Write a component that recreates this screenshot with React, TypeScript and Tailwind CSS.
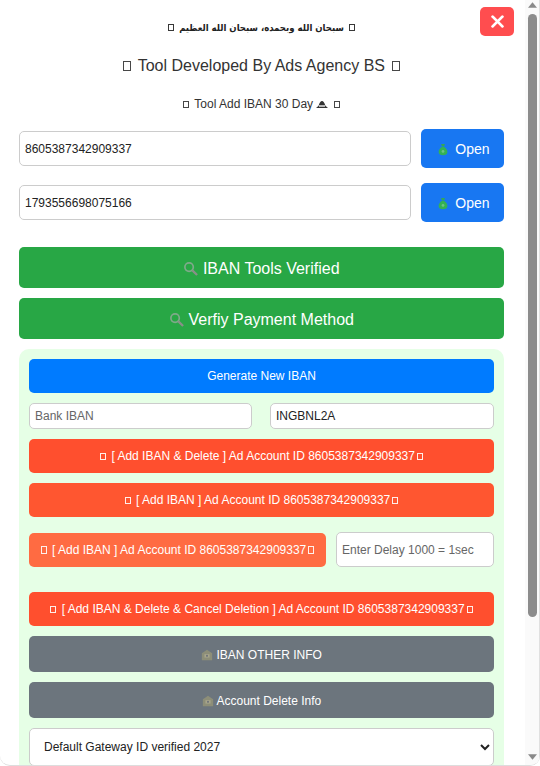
const font = "font-['Liberation_Sans','DejaVu_Sans',sans-serif]"

const Box = () => (
  <span className="inline-block border border-current opacity-90 w-[0.5em] h-[0.62em] mx-[0.16em] align-[-0.02em]" />
)

function MoneyBag() {
  return (
    <svg viewBox="0 0 16 20" className="w-[10px] h-[13px] ml-[3px] mr-[3px] inline-block align-[-2px]">
      <path d="M5 1h6L9.800 5H6.200z" fill="#34a853" />
      <path d="M6 6h4c3 2 5 5 5 8 0 3.500-3 5-7 5s-7-1.500-7-5c0-3 2-6 5-8z" fill="#34b254" />
      <circle cx="8" cy="13" r="2.200" fill="#6cc485" />
    </svg>
  )
}

function Magnifier() {
  return (
    <svg viewBox="0 0 16 16" className="w-[15px] h-[15px] inline-block align-[-2px]" fill="none">
      <circle cx="6.500" cy="6.500" r="4.500" stroke="#7fa98a" strokeWidth="1.800" />
      <path d="M10 10l5 5" stroke="#8a8f88" strokeWidth="2.400" />
    </svg>
  )
}

function Bank() {
  return (
    <svg viewBox="0 0 14 14" className="w-[12px] h-[12px] inline-block align-[-2px]">
      <path d="M1 5l6-4 6 4v8H1z" fill="#8d8e78" />
      <rect x="4" y="6" width="6" height="4" fill="#a7a58c" />
      <circle cx="7" cy="8" r="1.200" fill="#6d7178" />
    </svg>
  )
}

function Dome() {
  return (
    <svg viewBox="0 0 14 8" className="w-[12px] h-[7px] inline-block align-[0px]">
      <path d="M0 8l3-2.500C4 2 5.500 0 7 0s3 2 4 5.500L14 8z" fill="#333" />
      <rect x="3.500" y="5" width="7" height="1.500" fill="#fff" />
    </svg>
  )
}

const inputCls = 'bg-white border border-[#ccc] rounded-[5px] px-[5px] text-[12px] text-[#222] placeholder:text-[#666] outline-none'

function RedButton({ label, className = '' }: { label: string; className?: string }) {
  return (
    <button className={`h-[34px] rounded-[5px] text-white text-[12px] whitespace-nowrap ${className}`}>
      <Box /> {label}
      <Box />
    </button>
  )
}

export default function App() {
  return (
    <div className={`${font} flex w-[540px] h-[766px] bg-white overflow-hidden rounded-b-[10px] border-b border-[#ddd]`}>
      <main className="relative w-[525px] shrink-0 pl-[19px] pr-[21px] overflow-hidden">
        <button className="absolute left-[480px] top-[7px] w-[34px] h-[29px] rounded-[5px] bg-[#ff4d4f] flex items-center justify-center">
          <svg viewBox="0 0 12 12" className="w-[13px] h-[13px]">
            <path d="M1.500 1.500l9 9M10.500 1.500l-9 9" stroke="#fff" strokeWidth="2.600" strokeLinecap="round" />
          </svg>
        </button>

        <p className="pt-[19px] h-[46px] text-center text-[12px] text-[#222] leading-[16px]">
          <Box />{' '}
          <span className="text-[9.5px] font-bold font-['DejaVu_Sans_Condensed','DejaVu_Sans',sans-serif]">
            سبحان الله وبحمده، سبحان الله العظيم
          </span>{' '}
          <Box />
        </p>
        <h1 className="h-[35px] text-center text-[16px] text-[#333] leading-[40px]">
          <Box /> Tool Developed By Ads Agency BS <Box />
        </h1>
        <p className="h-[48px] pt-[15px] text-center text-[12px] text-[#333] leading-[16px]">
          <Box /> Tool Add IBAN 30 Day <Dome /> <Box />
        </p>

        <div className="flex flex-col gap-[15px]">
          {['8605387342909337', '1793556698075166'].map((id) => (
            <div key={id} className="flex items-center gap-[10px]">
              <input readOnly value={id} className={`${inputCls} flex-1 min-w-0 h-[35px]`} />
              <button className="w-[83px] h-[39px] pt-[2px] rounded-[5px] bg-[#1877f2] text-white text-[14px]">
                <MoneyBag /> Open
              </button>
            </div>
          ))}
        </div>

        <div className="flex flex-col gap-[10px] mt-[25px]">
          <button className="h-[41px] pt-[2px] rounded-[5px] bg-[#28a745] text-white text-[16px]">
            <Magnifier /> IBAN Tools Verified
          </button>
          <button className="h-[41px] pt-[2px] rounded-[5px] bg-[#28a745] text-white text-[16px]">
            <Magnifier /> Verfiy Payment Method
          </button>
        </div>

        <section className="mt-[10px] rounded-[10px] bg-[#e6ffe6] p-[10px] flex flex-col">
          <button className="h-[34px] rounded-[5px] bg-[#007bff] text-white text-[12px]">Generate New IBAN</button>

          <div className="flex gap-[18px] mt-[10px]">
            <input placeholder="Bank IBAN" className={`${inputCls} w-[223px] shrink-0 h-[26px]`} />
            <input readOnly value="INGBNL2A" className={`${inputCls} flex-1 min-w-0 h-[26px]`} />
          </div>

          <RedButton label="[ Add IBAN & Delete ] Ad Account ID 8605387342909337" className="mt-[10px] bg-[#ff4f2e]" />
          <RedButton label="[ Add IBAN ] Ad Account ID 8605387342909337" className="mt-[10px] bg-[#ff5630]" />

          <div className="flex items-center gap-[10px] mt-[15px]">
            <RedButton label="[ Add IBAN ] Ad Account ID 8605387342909337" className="w-[297px] shrink-0 bg-[#ff6b42]" />
            <input placeholder="Enter Delay 1000 = 1sec" className={`${inputCls} flex-1 min-w-0 h-[35px]`} />
          </div>

          <RedButton label="[ Add IBAN & Delete & Cancel Deletion ] Ad Account ID 8605387342909337" className="mt-[25px] bg-[#ff4f2e]" />

          <button className="h-[36px] pt-[2px] mt-[10px] rounded-[5px] bg-[#6c757d] text-white text-[12px]">
            <Bank /> IBAN OTHER INFO
          </button>
          <button className="h-[36px] pt-[2px] mt-[10px] rounded-[5px] bg-[#6c757d] text-white text-[12px]">
            <Bank /> Account Delete Info
          </button>

          <select className="h-[38px] mt-[10px] rounded-[5px] bg-white border border-[#ccc] pl-[10px] pr-[2px] text-[12px] text-[#222] outline-none">
            <option>Default Gateway ID verified 2027</option>
          </select>
        </section>
      </main>

      <div className="w-[15px] shrink-0 bg-[#fafafa] border-r border-[#e0e0e0] flex flex-col items-center">
        <svg viewBox="0 0 10 6" className="w-[9px] h-[6px] mt-[2px] ml-[1px]">
          <path d="M5 0l5 6H0z" fill="#8a8a8a" />
        </svg>
        <div className="w-[9px] h-[603px] mt-[6px] ml-[1px] rounded-full bg-[#8c8c8c]" />
        <svg viewBox="0 0 10 6" className="w-[9px] h-[6px] mt-auto mb-[5px] ml-[1px]">
          <path d="M5 6l5-6H0z" fill="#8a8a8a" />
        </svg>
      </div>
    </div>
  )
}
